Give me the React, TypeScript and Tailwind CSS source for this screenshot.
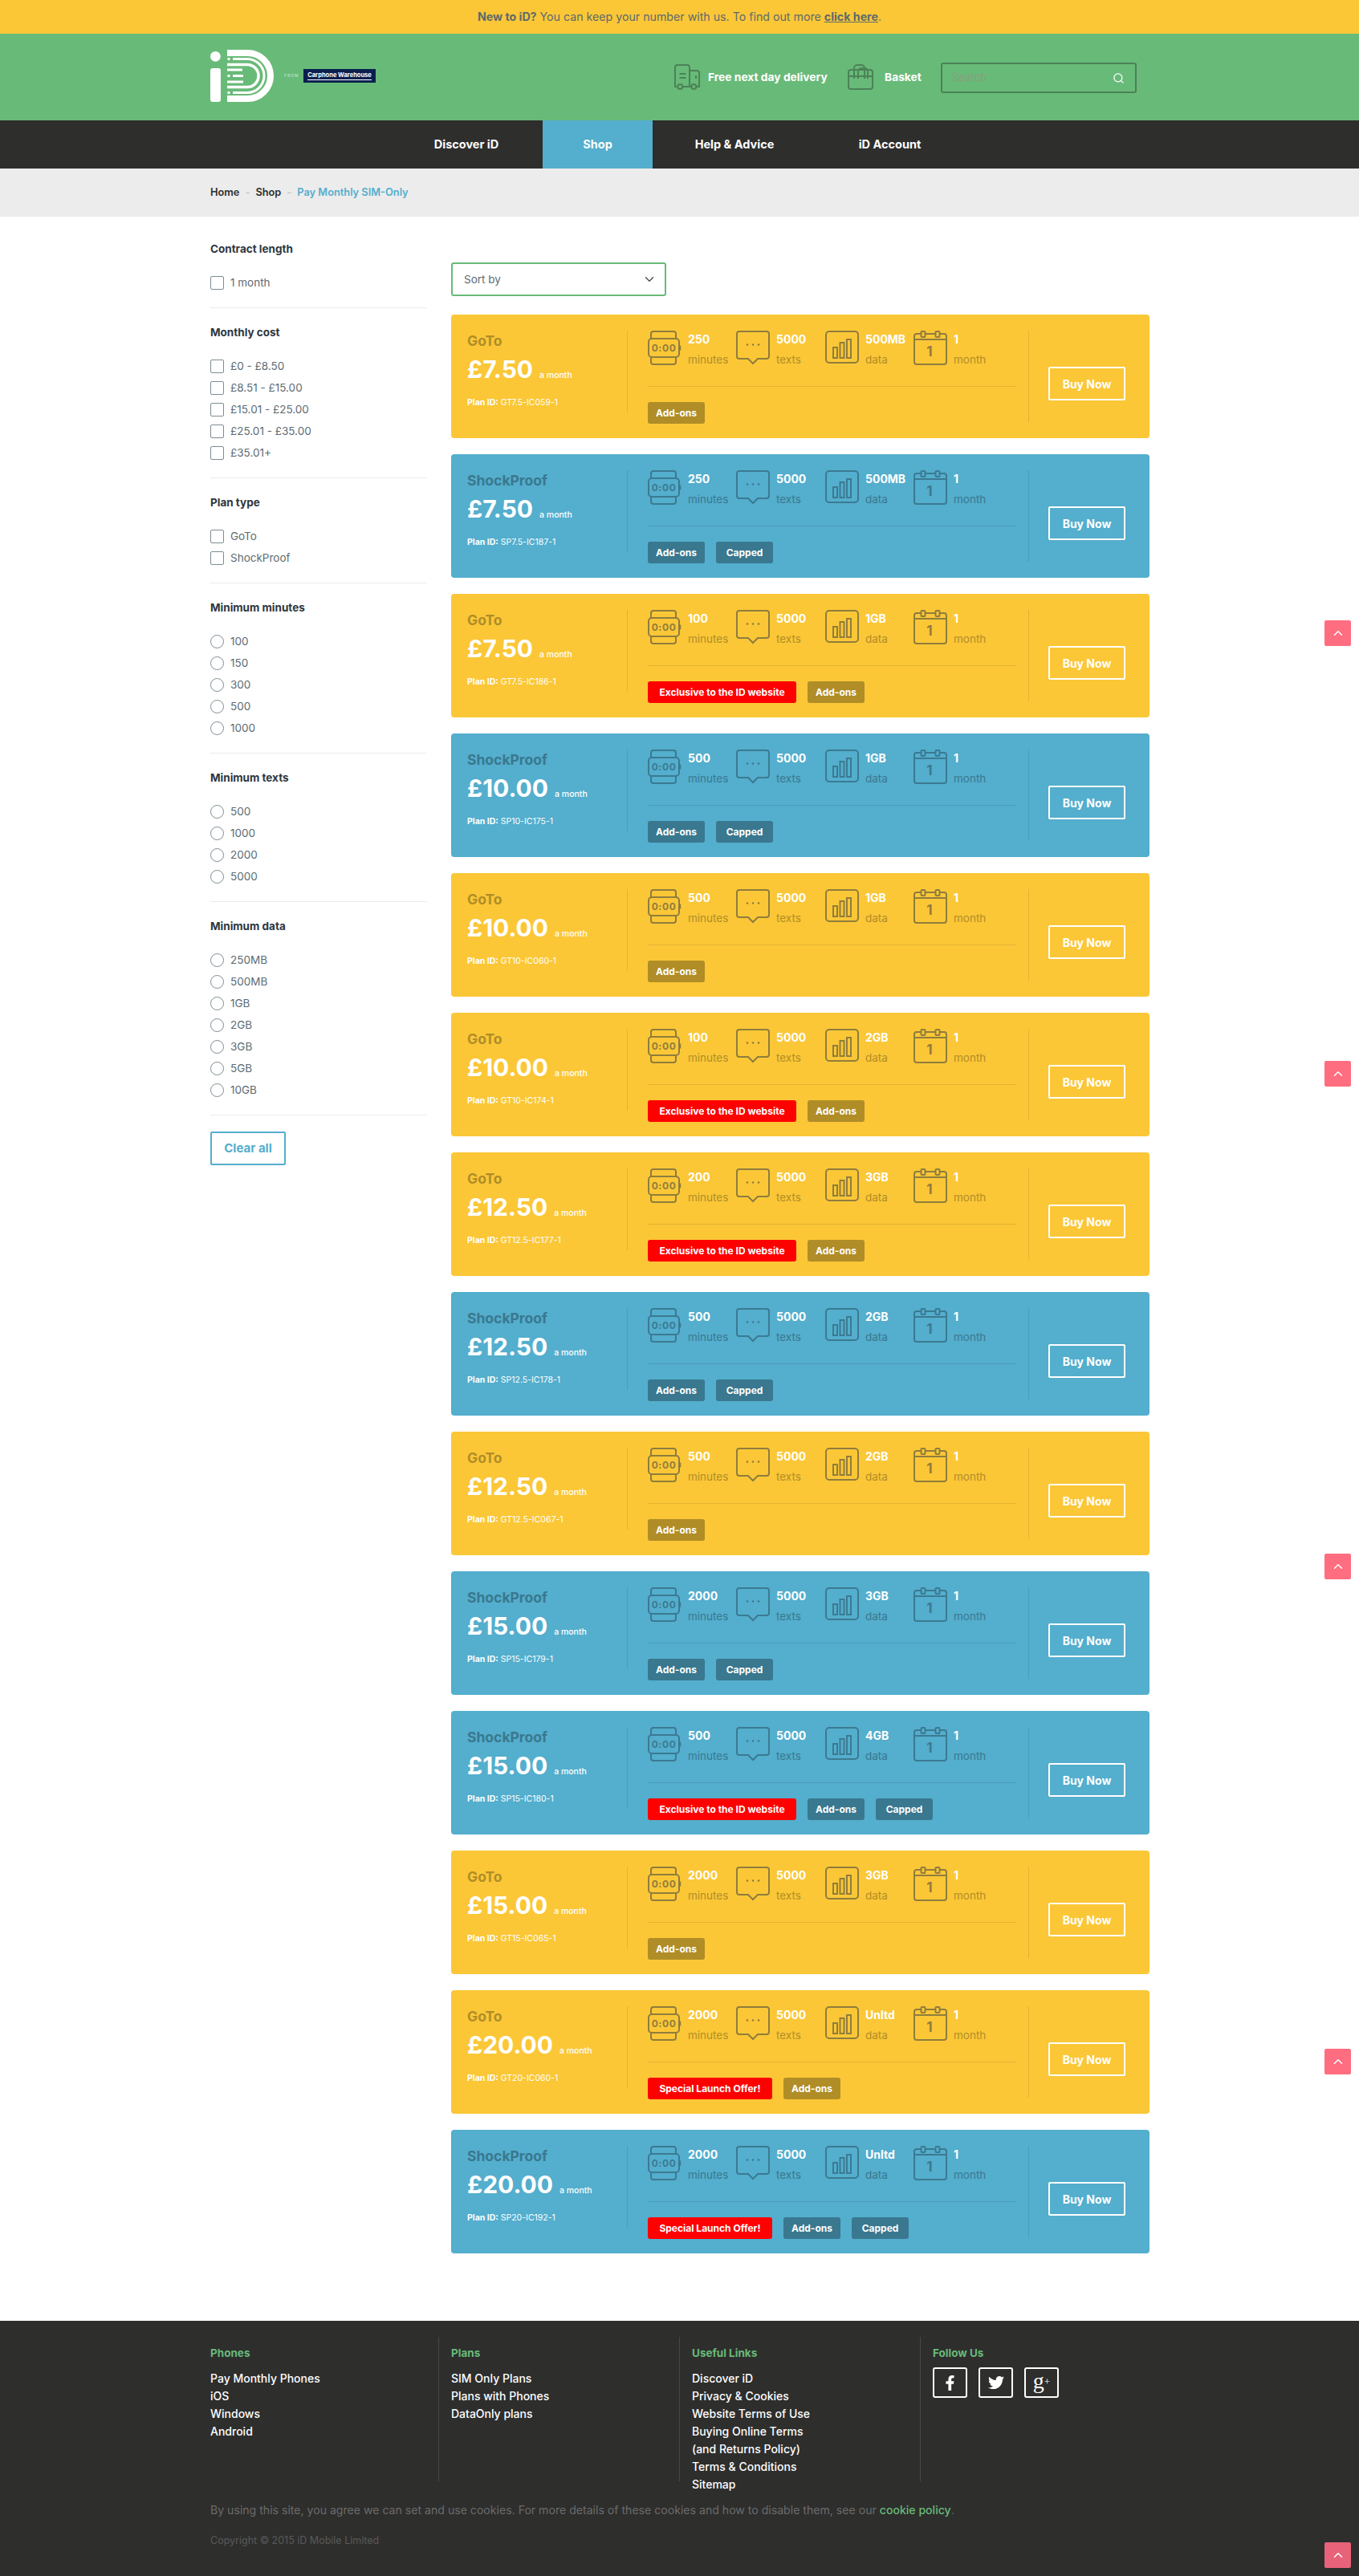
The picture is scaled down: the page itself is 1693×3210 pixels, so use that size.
import { ChevronDown, ChevronUp, Search } from 'lucide-react';
import { FaFacebookF, FaTwitter } from 'react-icons/fa';

// Card colours per plan type
const themes = {
  GoTo: {
    card: 'bg-[#fbc737]',
    title: 'text-[#b08d27]',
    label: 'text-[#b08d27]',
    icon: '#8f7d3c',
    line: 'border-[#e3b435]',
    tag: 'bg-[#b08d27]',
  },
  ShockProof: {
    card: 'bg-[#54aecd]',
    title: 'text-[#39788f]',
    label: 'text-[#39788f]',
    icon: '#3b7a92',
    line: 'border-[#4c9dba]',
    tag: 'bg-[#39788f]',
  },
};

const plans = [
  { type: 'GoTo', price: '£7.50', id: 'GT7.5-IC059-1', mins: '250', data: '500MB', tags: ['Add-ons'] },
  { type: 'ShockProof', price: '£7.50', id: 'SP7.5-IC187-1', mins: '250', data: '500MB', tags: ['Add-ons', 'Capped'] },
  { type: 'GoTo', price: '£7.50', id: 'GT7.5-IC186-1', mins: '100', data: '1GB', tags: ['Exclusive to the ID website', 'Add-ons'] },
  { type: 'ShockProof', price: '£10.00', id: 'SP10-IC175-1', mins: '500', data: '1GB', tags: ['Add-ons', 'Capped'] },
  { type: 'GoTo', price: '£10.00', id: 'GT10-IC060-1', mins: '500', data: '1GB', tags: ['Add-ons'] },
  { type: 'GoTo', price: '£10.00', id: 'GT10-IC174-1', mins: '100', data: '2GB', tags: ['Exclusive to the ID website', 'Add-ons'] },
  { type: 'GoTo', price: '£12.50', id: 'GT12.5-IC177-1', mins: '200', data: '3GB', tags: ['Exclusive to the ID website', 'Add-ons'] },
  { type: 'ShockProof', price: '£12.50', id: 'SP12.5-IC178-1', mins: '500', data: '2GB', tags: ['Add-ons', 'Capped'] },
  { type: 'GoTo', price: '£12.50', id: 'GT12.5-IC067-1', mins: '500', data: '2GB', tags: ['Add-ons'] },
  { type: 'ShockProof', price: '£15.00', id: 'SP15-IC179-1', mins: '2000', data: '3GB', tags: ['Add-ons', 'Capped'] },
  { type: 'ShockProof', price: '£15.00', id: 'SP15-IC180-1', mins: '500', data: '4GB', tags: ['Exclusive to the ID website', 'Add-ons', 'Capped'] },
  { type: 'GoTo', price: '£15.00', id: 'GT15-IC065-1', mins: '2000', data: '3GB', tags: ['Add-ons'] },
  { type: 'GoTo', price: '£20.00', id: 'GT20-IC060-1', mins: '2000', data: 'Unltd', tags: ['Special Launch Offer!', 'Add-ons'] },
  { type: 'ShockProof', price: '£20.00', id: 'SP20-IC192-1', mins: '2000', data: 'Unltd', tags: ['Special Launch Offer!', 'Add-ons', 'Capped'] },
];

const filters = [
  { title: 'Contract length', kind: 'box', options: ['1 month'] },
  { title: 'Monthly cost', kind: 'box', options: ['£0 - £8.50', '£8.51 - £15.00', '£15.01 - £25.00', '£25.01 - £35.00', '£35.01+'] },
  { title: 'Plan type', kind: 'box', options: ['GoTo', 'ShockProof'] },
  { title: 'Minimum minutes', kind: 'radio', options: ['100', '150', '300', '500', '1000'] },
  { title: 'Minimum texts', kind: 'radio', options: ['500', '1000', '2000', '5000'] },
  { title: 'Minimum data', kind: 'radio', options: ['250MB', '500MB', '1GB', '2GB', '3GB', '5GB', '10GB'] },
];

const footerLinks = [
  { title: 'Phones', links: ['Pay Monthly Phones', 'iOS', 'Windows', 'Android'] },
  { title: 'Plans', links: ['SIM Only Plans', 'Plans with Phones', 'DataOnly plans'] },
  {
    title: 'Useful Links',
    links: ['Discover iD', 'Privacy & Cookies', 'Website Terms of Use', 'Buying Online Terms', '(and Returns Policy)', 'Terms & Conditions', 'Sitemap'],
  },
];

function Logo() {
  return (
    <svg width="80" height="65" viewBox="0 0 80 65" fill="none" stroke="#fff">
      <circle cx="6.4" cy="8.3" r="6.4" fill="#fff" stroke="none" />
      <rect x="0" y="23" width="13" height="42" rx="3" fill="#fff" stroke="none" />
      <path d="M21 4H46.5A28.5 28.5 0 0 1 46.5 61H21" strokeWidth="8" />
      <path d="M28 11.5H46A21 21 0 0 1 46 53.5H28" strokeWidth="3" />
      <path d="M21 18.5H46A14 14 0 0 1 46 46.5H21" strokeWidth="3.5" />
      <path d="M21 25H40M28 32.5H41M21 40H41" strokeWidth="3" />
      <circle cx="23" cy="11.5" r="1.8" fill="#fff" stroke="none" />
      <circle cx="23" cy="32.5" r="1.8" fill="#fff" stroke="none" />
      <circle cx="23" cy="53.5" r="1.8" fill="#fff" stroke="none" />
    </svg>
  );
}

function TruckIcon() {
  return (
    <svg width="32" height="32" viewBox="0 0 32 32" fill="none" stroke="#4b8257" strokeWidth="2">
      <path d="M3.5 28H1V4a3 3 0 0 1 3-3h12a3 3 0 0 1 3 3v24h-8M19 8h9a3 3 0 0 1 3 3v17h-3.5M19 28h2" />
      <path d="M6.5 12h8M6.5 17h8M27 14v4" />
      <circle cx="7.3" cy="28" r="3" />
      <circle cx="24.3" cy="28" r="3" />
    </svg>
  );
}

function BagIcon() {
  return (
    <svg width="32" height="32" viewBox="0 0 32 32" fill="none" stroke="#4b8257" strokeWidth="2">
      <rect x="1" y="7" width="30" height="24" rx="3" />
      <path d="M1 15h30" />
      <path d="M8 18V5a4 4 0 0 1 4-4h5a4 4 0 0 1 4 4v13" />
      <path d="M13 18V9a4 4 0 0 1 4-4h4a4 4 0 0 1 4 4v9" />
    </svg>
  );
}

function WatchIcon({ color }: { color: string }) {
  return (
    <svg width="42" height="43" viewBox="0 0 42 43" fill="none" stroke={color} strokeWidth="2">
      <path d="M4 10V4a3 3 0 0 1 3-3h25a3 3 0 0 1 3 3v6M4 33v6a3 3 0 0 0 3 3h25a3 3 0 0 0 3-3v-6" />
      <rect x="1" y="10" width="38" height="23" rx="4" />
      <path d="M40 18.5v6" strokeWidth="2.5" />
      <text x="20" y="26" textAnchor="middle" fontSize="12" fontWeight="700" letterSpacing="0.6" fill={color} stroke="none">
        0:00
      </text>
    </svg>
  );
}

function TextIcon({ color }: { color: string }) {
  return (
    <svg width="42" height="43" viewBox="0 0 42 43" fill="none" stroke={color} strokeWidth="2">
      <path d="M4 1h34a3 3 0 0 1 3 3v28a3 3 0 0 1-3 3H27l-6 6-6-6H4a3 3 0 0 1-3-3V4a3 3 0 0 1 3-3z" />
      <circle cx="14" cy="17.5" r="1.3" fill={color} stroke="none" />
      <circle cx="21" cy="17.5" r="1.3" fill={color} stroke="none" />
      <circle cx="28" cy="17.5" r="1.3" fill={color} stroke="none" />
    </svg>
  );
}

function DataIcon({ color }: { color: string }) {
  return (
    <svg width="42" height="43" viewBox="0 0 42 43" fill="none" stroke={color} strokeWidth="2">
      <rect x="1" y="1" width="40" height="39" rx="4" />
      <rect x="10" y="21" width="5" height="13" />
      <rect x="18.5" y="15" width="5" height="19" />
      <rect x="27" y="11" width="5" height="23" />
    </svg>
  );
}

function CalendarIcon({ color }: { color: string }) {
  return (
    <svg width="42" height="43" viewBox="0 0 42 43" fill="none" stroke={color} strokeWidth="2">
      <path d="M9 4H4a3 3 0 0 0-3 3v32a3 3 0 0 0 3 3h34a3 3 0 0 0 3-3V7a3 3 0 0 0-3-3h-5M15 4h12M1 11h40" />
      <rect x="9.5" y="1" width="5" height="7" rx="1" />
      <rect x="27.5" y="1" width="5" height="7" rx="1" />
      <text x="20" y="32" textAnchor="middle" fontSize="17" fontWeight="700" fill={color} stroke="none">
        1
      </text>
    </svg>
  );
}

function Stat({ icon, value, label, labelClass, width }: any) {
  return (
    <div className={`flex gap-2 ${width}`}>
      {icon}
      <div>
        <div className="h-[22px] text-[14px] leading-[22px] font-bold text-white">{value}</div>
        <div className={`mt-[3px] h-[22px] text-[13.5px] leading-[22px] ${labelClass}`}>{label}</div>
      </div>
    </div>
  );
}

function PlanCard({ plan }: { plan: (typeof plans)[number] }) {
  const t = themes[plan.type as keyof typeof themes];
  return (
    <div className={`flex h-[154px] rounded-[4px] p-5 ${t.card}`}>
      {/* Name and price */}
      <div className={`h-[102px] w-[200px] shrink-0 border-r ${t.line}`}>
        <div className={`h-[26px] text-[17.5px] leading-[26px] font-bold ${t.title}`}>{plan.type}</div>
        <div className="mt-[6px] flex h-[32px] items-baseline gap-2 text-white">
          <span className="text-[30px] leading-[32px] font-bold">{plan.price}</span>
          <span className="text-[10.5px] font-medium">a month</span>
        </div>
        <div className="mt-[19px] h-[14px] text-[10.5px] leading-[14px] text-white">
          <span className="font-bold">Plan ID:</span> {plan.id}
        </div>
      </div>

      {/* Allowances and tags */}
      <div className={`h-[114px] w-[500px] shrink-0 border-r pr-[15px] pl-[25px] ${t.line}`}>
        <div className={`flex h-[70px] border-b ${t.line}`}>
          <Stat icon={<WatchIcon color={t.icon} />} value={plan.mins} label="minutes" labelClass={t.label} width="w-[110px]" />
          <Stat icon={<TextIcon color={t.icon} />} value="5000" label="texts" labelClass={t.label} width="w-[111px]" />
          <Stat icon={<DataIcon color={t.icon} />} value={plan.data} label="data" labelClass={t.label} width="w-[110px]" />
          <Stat icon={<CalendarIcon color={t.icon} />} value="1" label="month" labelClass={t.label} width="w-[110px]" />
        </div>
        <div className="mt-[19px] flex gap-[14px]">
          {plan.tags.map((tag) => (
            <span
              key={tag}
              className={`flex h-[27px] items-center justify-center rounded-[3px] text-[12px] font-bold text-white ${
                tag === 'Add-ons' || tag === 'Capped' ? 'w-[71px]' : tag.startsWith('Special') ? 'w-[155px]' : 'w-[185px]'
              } ${tag === 'Add-ons' || tag === 'Capped' ? t.tag : 'bg-[#ff0000]'}`}
            >
              {tag}
            </span>
          ))}
        </div>
      </div>

      <div className="pt-[45px] pl-6">
        <button className="h-[42px] w-[96px] rounded-[2px] border-2 border-white text-[14px] font-bold text-white">Buy Now</button>
      </div>
    </div>
  );
}

function FilterGroup({ group, first }: { group: (typeof filters)[number]; first: boolean }) {
  return (
    <div className={`border-b border-[#ececec] pb-[17.5px] ${first ? '' : 'pt-5'}`}>
      <h3 className="mb-[18.5px] h-5 text-[13.5px] leading-5 font-bold text-[#2e3640]">{group.title}</h3>
      {group.options.map((option) => (
        <label key={option} className="flex h-[27px] items-center gap-2 text-[13.5px] text-[#5d6b72]">
          <span className={`h-[17px] w-[17px] border border-[#7d8c92] ${group.kind === 'radio' ? 'rounded-full' : 'rounded-[2px]'}`} />
          {option}
        </label>
      ))}
    </div>
  );
}

function ScrollTop({ className }: { className: string }) {
  return (
    <div className={`absolute left-[1650px] flex h-[32px] w-[33px] items-center justify-center rounded-[2px] text-white ${className}`}>
      <ChevronUp size={18} strokeWidth={2} />
    </div>
  );
}

export default function App() {
  return (
    <div className="relative min-h-[3210px] bg-white font-['Inter',sans-serif]">
      {/* Top notice */}
      <div className="flex h-[42px] items-center justify-center bg-[#fbc737] text-[14.2px] text-[#5e6a6b]">
        <p>
          <b>New to iD?</b> You can keep your number with us. To find out more{' '}
          <a className="font-bold underline">click here</a>.
        </p>
      </div>

      {/* Header */}
      <header className="flex h-[108px] bg-[#68ba78] pl-[262px]">
        <div className="mt-5 flex h-[65px] w-[578px] shrink-0 items-center">
          <Logo />
          <span className="ml-3 w-[18px] text-[5px] tracking-[1px] text-[#cfe6d3]">FROM</span>
          <div className="ml-[6px] flex h-[17px] w-[90px] items-center justify-center bg-[#0b1f4f] text-[7.5px] font-bold text-white">
            <span className="border-b border-white leading-[10px]">Carphone Warehouse</span>
          </div>
        </div>
        <div className="mt-[38px] flex h-[32px] items-center">
          <TruckIcon />
          <span className="ml-[10px] w-[174px] text-[13.8px] font-bold text-white">Free next day delivery</span>
          <BagIcon />
          <span className="ml-[14px] w-[70px] text-[13.8px] font-bold text-white">Basket</span>
        </div>
        <div className="mt-9 flex h-[38px] w-[244px] items-center justify-between rounded-[3px] border-2 border-[#4b8257] pr-[13px] pl-3 text-[13px] text-[#8d9a80]">
          Search
          <Search size={15} color="#fff" strokeWidth={2} />
        </div>
      </header>

      {/* Main navigation */}
      <nav className="flex h-[60px] bg-[#2e2e2d] pl-[486px] text-[14.5px] font-bold text-white">
        <a className="flex w-[190px] items-center justify-center">Discover iD</a>
        <a className="flex w-[137px] items-center justify-center bg-[#54aecd]">Shop</a>
        <a className="flex w-[204px] items-center justify-center">Help &amp; Advice</a>
        <a className="flex w-[183px] items-center justify-center">iD Account</a>
      </nav>

      {/* Breadcrumb */}
      <div className="flex h-[60px] items-center gap-[7px] bg-[#ececec] pl-[262px] text-[12.8px] font-semibold text-[#2e2e2d]">
        <span>Home</span>
        <span className="text-[#c5c5c5]">-</span>
        <span>Shop</span>
        <span className="text-[#c5c5c5]">-</span>
        <span className="text-[#54aecd]">Pay Monthly SIM-Only</span>
      </div>

      <div className="flex pl-[262px]">
        {/* Filters */}
        <aside className="mt-[30px] w-[270px] shrink-0">
          {filters.map((group, i) => (
            <FilterGroup key={group.title} group={group} first={i === 0} />
          ))}
          <button className="mt-5 h-[42px] w-[94px] rounded-[2px] border-2 border-[#54aecd] text-[15px] font-bold text-[#54aecd]">Clear all</button>
        </aside>

        {/* Plans */}
        <main className="mt-[57px] ml-[30px] w-[870px] shrink-0">
          <div className="mb-[23px] flex h-[42px] w-[268px] items-center justify-between rounded-[3px] border-2 border-[#68ba78] pr-[10px] pl-[14px] text-[13.5px] text-[#5d6b72]">
            Sort by
            <ChevronDown size={18} strokeWidth={1.75} color="#3f4a50" />
          </div>
          <div className="flex flex-col gap-5">
            {plans.map((plan) => (
              <PlanCard key={plan.id} plan={plan} />
            ))}
          </div>
        </main>
      </div>

      {/* Footer */}
      <footer className="mt-[84px] h-[318px] bg-[#2e2e2d] pt-5 pl-[247px]">
        <div className="flex">
          {footerLinks.map((col) => (
            <div key={col.title} className="h-[180px] w-[300px] border-r border-[#474746] pt-[10px] pl-[15px]">
              <h4 className="mb-[11px] h-5 text-[13.5px] leading-5 font-bold text-[#68ba78]">{col.title}</h4>
              {col.links.map((link) => (
                <a key={link} className="block h-[22px] text-[14px] leading-[22px] font-medium text-white">
                  {link}
                </a>
              ))}
            </div>
          ))}
          <div className="pt-[10px] pl-[15px]">
            <h4 className="mb-[8px] h-5 text-[13.5px] leading-5 font-bold text-[#68ba78]">Follow Us</h4>
            <div className="flex gap-[14px]">
              <span className="flex h-[38px] w-[43px] items-center justify-center rounded-[3px] border-2 border-white text-white">
                <FaFacebookF size={19} />
              </span>
              <span className="flex h-[38px] w-[43px] items-center justify-center rounded-[3px] border-2 border-white text-white">
                <FaTwitter size={20} />
              </span>
              <span className="flex h-[38px] w-[43px] items-center justify-center rounded-[3px] border-2 border-white pb-1 font-['Liberation_Serif',serif] text-[28px] leading-none text-white">
                g<span className="text-[13px]">+</span>
              </span>
            </div>
          </div>
        </div>
        <p className="mt-[26px] ml-[15px] h-5 text-[14.1px] leading-5 text-[#6b6b6a]">
          By using this site, you agree we can set and use cookies. For more details of these cookies and how to disable them, see our{' '}
          <a className="font-medium text-[#68ba78]">cookie policy</a>.
        </p>
        <p className="mt-[18px] ml-[15px] h-5 text-[12.5px] leading-5 text-[#5a5a59]">Copyright © 2015 iD Mobile Limited</p>
      </footer>

      {/* Scroll to top tabs */}
      <ScrollTop className="top-[773px] bg-[#ff6d80]" />
      <ScrollTop className="top-[1322px] bg-[#ff6d80]" />
      <ScrollTop className="top-[1936px] bg-[#ff6d80]" />
      <ScrollTop className="top-[2553px] bg-[#ff6d80]" />
      <ScrollTop className="top-[3168px] bg-[#e8627a]" />
    </div>
  );
}
